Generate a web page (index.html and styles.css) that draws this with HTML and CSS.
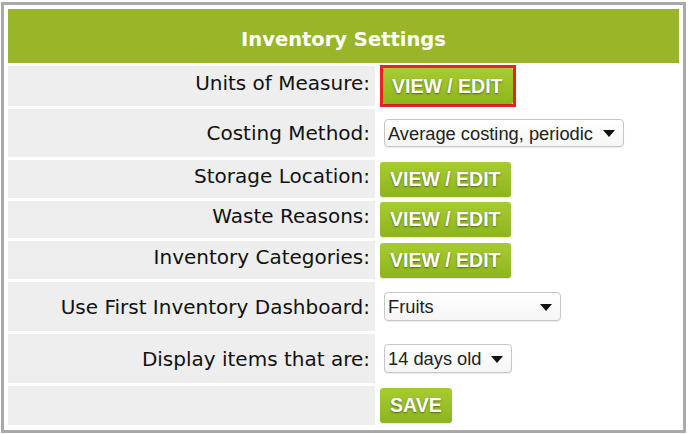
FILE: index.html
```html
<!DOCTYPE html>
<html lang="en">
<head>
    <meta charset="UTF-8">
    <meta name="viewport" content="width=device-width, initial-scale=1.0">
    <title>Inventory Settings</title>
    <link rel="stylesheet" href="styles.css">
</head>
<body>
    <div class="settings-box">
        <table class="settings">
            <tr class="head-row">
                <th colspan="2">Inventory Settings</th>
            </tr>
            <tr class="row-btn row-first">
                <td class="label">Units of Measure:</td>
                <td class="value"><span class="btn-frame"><button class="btn">VIEW / EDIT</button></span></td>
            </tr>
            <tr class="row-select row-costing">
                <td class="label">Costing Method:</td>
                <td class="value">
                    <span class="select-wrap">
                        <select class="select select-wide">
                            <option>Average costing, periodic</option>
                        </select>
                    </span>
                </td>
            </tr>
            <tr class="row-btn">
                <td class="label">Storage Location:</td>
                <td class="value"><button class="btn">VIEW / EDIT</button></td>
            </tr>
            <tr class="row-btn row-short">
                <td class="label">Waste Reasons:</td>
                <td class="value"><button class="btn">VIEW / EDIT</button></td>
            </tr>
            <tr class="row-btn">
                <td class="label">Inventory Categories:</td>
                <td class="value"><button class="btn">VIEW / EDIT</button></td>
            </tr>
            <tr class="row-select">
                <td class="label">Use First Inventory Dashboard:</td>
                <td class="value">
                    <span class="select-wrap">
                        <select class="select select-mid">
                            <option>Fruits</option>
                        </select>
                    </span>
                </td>
            </tr>
            <tr class="row-select">
                <td class="label">Display items that are:</td>
                <td class="value">
                    <span class="select-wrap">
                        <select class="select select-small">
                            <option>14 days old</option>
                        </select>
                    </span>
                </td>
            </tr>
            <tr class="row-btn row-save">
                <td class="label"></td>
                <td class="value"><button class="btn">SAVE</button></td>
            </tr>
        </table>
    </div>
</body>
</html>
```

FILE: styles.css
```css
body { margin: 0; background: #fff; }

.settings-box {
    margin: 2px 0 0 1px; padding: 1px; width: 685px; height: 431px;
    border: 3px solid #a9a9a9; box-sizing: border-box;
}

.settings { width: 100%; border-spacing: 3px; border-collapse: separate; }
.settings td, .settings th { padding: 0; }

.head-row { height: 54px; }
.head-row th {
    background: #99b528; color: #fff; text-align: center;
    font: bold 19.5px "DejaVu Sans", Verdana, sans-serif; padding-top: 6px;
}

.row-btn { height: 38px; }
.row-first { height: 40px; }
.row-short { height: 37px; }
.row-save { height: 39px; }
.row-select { height: 49px; }
.row-costing { height: 48px; }

.label {
    width: 362px; background: #eeeeee; text-align: right; vertical-align: middle;
    padding-right: 5px !important; color: #111;
    font: 20px "DejaVu Sans", Verdana, sans-serif;
}
.row-btn .label { padding-bottom: 7px !important; }

.value { vertical-align: middle; padding-left: 2px !important; }

.btn {
    height: 35px; padding: 0 10px; border: none; border-radius: 3px;
    background: linear-gradient(#a7cc31, #8db51c); color: #fff; cursor: pointer;
    font: bold 19.5px "Liberation Sans", Arial, sans-serif;
    text-shadow: 0 1px 2px rgba(0, 0, 0, 0.45); vertical-align: middle;
    box-shadow: 0 1px 1px rgba(0, 0, 0, 0.1);
}
.btn:hover { background: linear-gradient(#99bf27, #7fa515); }

.btn-frame {
    display: inline-block; margin: -1px 0; border: 3px solid #e8231d; vertical-align: middle;
}
.btn-frame .btn { display: block; height: 36px; padding: 0 10px 0 9px; border-radius: 2px; }

.select-wrap { position: relative; display: inline-block; margin-left: 4px; vertical-align: middle; }
.select-wrap::after {
    content: ""; position: absolute; right: 9px; top: 50%; margin-top: -3px;
    border-left: 6px solid transparent; border-right: 6px solid transparent;
    border-top: 7px solid #111; pointer-events: none;
}
.select {
    appearance: none; -webkit-appearance: none; display: block;
    height: 29px; padding: 0 0 0 3px; color: #222;
    border: 1px solid #c6c6c6; border-radius: 4px;
    background: linear-gradient(#ffffff, #f6f6f6);
    box-shadow: 0 1px 1px rgba(0, 0, 0, 0.08);
    font: 18.3px "Liberation Sans", Arial, sans-serif;
}
.select-wide { width: 240px; height: 28px; }
.select-mid { width: 177px; }
.select-small { width: 128px; }
```
